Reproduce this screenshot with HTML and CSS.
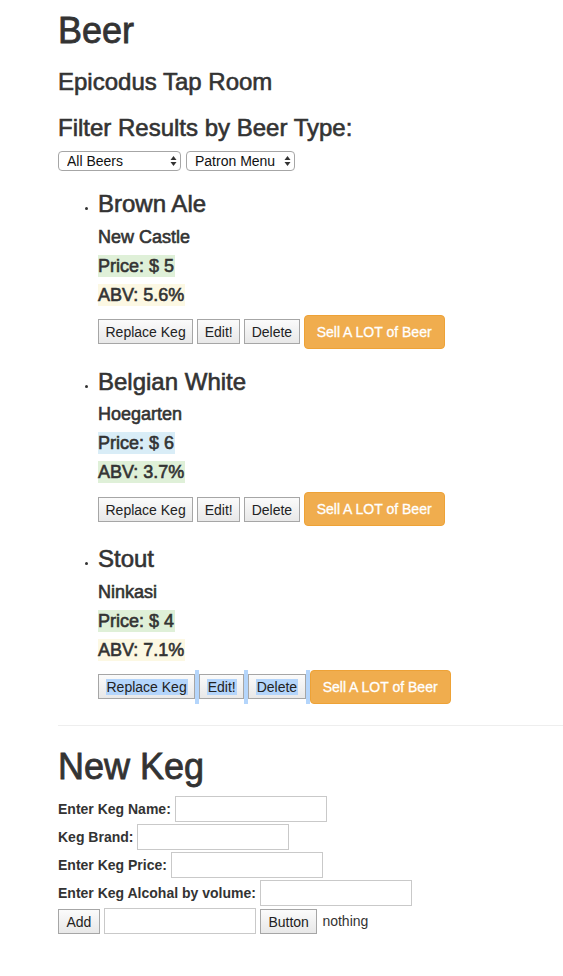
FILE: index.html
```html
<!DOCTYPE html>
<html lang="en">
<head>
<meta charset="utf-8">
<title>Beer</title>
<link rel="stylesheet" href="styles.css">
</head>
<body>
<div class="container">
  <h1 class="page-title">Beer</h1>
  <h3 class="subtitle">Epicodus Tap Room</h3>
  <h3>Filter Results by Beer Type:</h3>
  <div class="filters">
    <span class="select-wrap">
      <select class="select select-type"><option>All Beers</option></select>
      <svg class="select-arrows" width="7" height="12" viewBox="0 0 7 12"><path d="M0.5 5 L3.5 1 L6.5 5 Z M0.5 7 L3.5 11 L6.5 7 Z"/></svg>
    </span>
    <span class="select-wrap">
      <select class="select select-menu"><option>Patron Menu</option></select>
      <svg class="select-arrows" width="7" height="12" viewBox="0 0 7 12"><path d="M0.5 5 L3.5 1 L6.5 5 Z M0.5 7 L3.5 11 L6.5 7 Z"/></svg>
    </span>
  </div>
  <ul class="kegs">
    <li>
      <h3>Brown Ale</h3>
      <h4>New Castle</h4>
      <h4><span class="tag bg-success">Price: $ 5</span></h4>
      <h4><span class="tag bg-warning">ABV: 5.6%</span></h4>
      <div class="actions">
        <button class="btn-native">Replace Keg</button>
        <button class="btn-native">Edit!</button>
        <button class="btn-native">Delete</button>
        <button class="btn-warning">Sell A LOT of Beer</button>
      </div>
    </li>
    <li>
      <h3>Belgian White</h3>
      <h4>Hoegarten</h4>
      <h4><span class="tag bg-info">Price: $ 6</span></h4>
      <h4><span class="tag bg-success">ABV: 3.7%</span></h4>
      <div class="actions">
        <button class="btn-native">Replace Keg</button>
        <button class="btn-native">Edit!</button>
        <button class="btn-native">Delete</button>
        <button class="btn-warning">Sell A LOT of Beer</button>
      </div>
    </li>
    <li>
      <h3>Stout</h3>
      <h4>Ninkasi</h4>
      <h4><span class="tag bg-success">Price: $ 4</span></h4>
      <h4><span class="tag bg-warning">ABV: 7.1%</span></h4>
      <div class="actions actions-selected">
        <button class="btn-native"><span class="hl">Replace Keg</span></button>
        <span class="sel-gap"></span>
        <button class="btn-native"><span class="hl">Edit!</span></button>
        <span class="sel-gap"></span>
        <button class="btn-native"><span class="hl">Delete</span></button>
        <span class="sel-gap"></span>
        <button class="btn-warning">Sell A LOT of Beer</button>
      </div>
    </li>
  </ul>
  <hr class="divider">
  <h1>New Keg</h1>
  <form class="new-keg">
    <div class="form-row">
      <label class="form-label">Enter Keg Name:</label>
      <input class="text-input" type="text">
    </div>
    <div class="form-row">
      <label class="form-label">Keg Brand:</label>
      <input class="text-input" type="text">
    </div>
    <div class="form-row">
      <label class="form-label">Enter Keg Price:</label>
      <input class="text-input" type="text">
    </div>
    <div class="form-row">
      <label class="form-label">Enter Keg Alcohal by volume:</label>
      <input class="text-input" type="text">
    </div>
    <div class="form-row">
      <button type="button" class="btn-native btn-form">Add</button>
      <input class="text-input" type="text">
      <button type="button" class="btn-native btn-form">Button</button>
      <span class="status">nothing</span>
    </div>
  </form>
</div>
</body>
</html>
```

FILE: styles.css
```css
html, body {
  margin: 0;
  padding: 0;
  background: #fff;
}

body {
  font-family: "Liberation Sans", Arial, sans-serif;
  font-size: 14px;
  line-height: 20px;
  color: #333;
}

.container {
  padding-left: 58px;
}

h1, h3, h4 {
  font-family: "Liberation Sans", Arial, sans-serif;
  font-weight: normal;
  color: #333;
  -webkit-text-stroke: 0.6px #333;
}

h1 {
  font-size: 36px;
  line-height: 39.6px;
  margin: 20px 0 10px;
  -webkit-text-stroke: 0.8px #333;
}

.page-title {
  margin-top: 11px;
}

h3 {
  font-size: 24px;
  line-height: 26.4px;
  margin: 20px 0 10px;
}

.subtitle {
  margin-top: 18px;
}

h4 {
  font-size: 18px;
  line-height: 19px;
  margin: 10px 0 10px;
}

.filters {
  display: flex;
  gap: 5px;
  height: 20px;
}

.select-wrap {
  position: relative;
  display: inline-block;
  height: 20px;
}

.select {
  -webkit-appearance: none;
  appearance: none;
  box-sizing: border-box;
  height: 20px;
  margin: 0;
  padding: 0 0 0 8px;
  border: 1px solid #a6a6a6;
  border-radius: 4px;
  background: #fff;
  font-family: "Liberation Sans", Arial, sans-serif;
  font-size: 14px;
  line-height: 18px;
  color: #111;
}

.select-type {
  width: 123px;
}

.select-menu {
  width: 109px;
}

.select-arrows {
  position: absolute;
  right: 4px;
  top: 4px;
  fill: #333;
}

.kegs {
  margin: 0 0 10px;
  padding-left: 40px;
}

.kegs li::marker {
  font-size: 10px;
}

.tag {
  padding: 1px 1px 1px 0;
}

.bg-success {
  background: #dff0d8;
}

.bg-warning {
  background: #fcf8e3;
}

.bg-info {
  background: #d9edf7;
}

.actions {
  display: flex;
  align-items: center;
  gap: 4px;
  height: 34px;
}

.actions-selected {
  gap: 0;
  align-items: stretch;
}

.actions-selected .btn-native {
  align-self: center;
}

.sel-gap {
  width: 4px;
  background: #b4d5fb;
}

.btn-native {
  box-sizing: border-box;
  height: 25px;
  margin: 0;
  padding: 1px 6.5px 0;
  border: 1px solid #a6a6a6;
  border-radius: 0;
  background: linear-gradient(#fbfbfb, #e8e8e8);
  font-family: "Liberation Sans", Arial, sans-serif;
  font-size: 14px;
  line-height: 20px;
  color: #222;
}

.btn-form {
  padding-left: 7.5px;
  padding-right: 7.5px;
}

.hl {
  background: #b4d5fb;
  padding: 0 1px;
}

.btn-warning {
  box-sizing: border-box;
  height: 34px;
  margin: 0;
  padding: 6px 12px;
  border: 1px solid #eea236;
  border-radius: 4px;
  background: #f0ad4e;
  font-family: "Liberation Sans", Arial, sans-serif;
  font-size: 14px;
  line-height: 20px;
  color: #fff;
  -webkit-text-stroke: 0.3px #fff;
}

.divider {
  margin: 21px 0 21px;
  border: 0;
  border-top: 1px solid #eee;
  height: 0;
}

.new-keg {
  margin: 0;
}

.form-row {
  display: flex;
  align-items: center;
  gap: 4px;
  height: 26px;
  margin-bottom: 2px;
}

.form-label {
  font-weight: bold;
  color: #333;
}

.text-input {
  box-sizing: border-box;
  width: 152px;
  height: 26px;
  margin: 0;
  padding: 2px 3px;
  border: 1px solid #c9c9c9;
  border-radius: 0;
  background: #fff;
  font-family: "Liberation Sans", Arial, sans-serif;
  font-size: 14px;
}

.status {
  margin-left: 1px;
  color: #333;
}
```
